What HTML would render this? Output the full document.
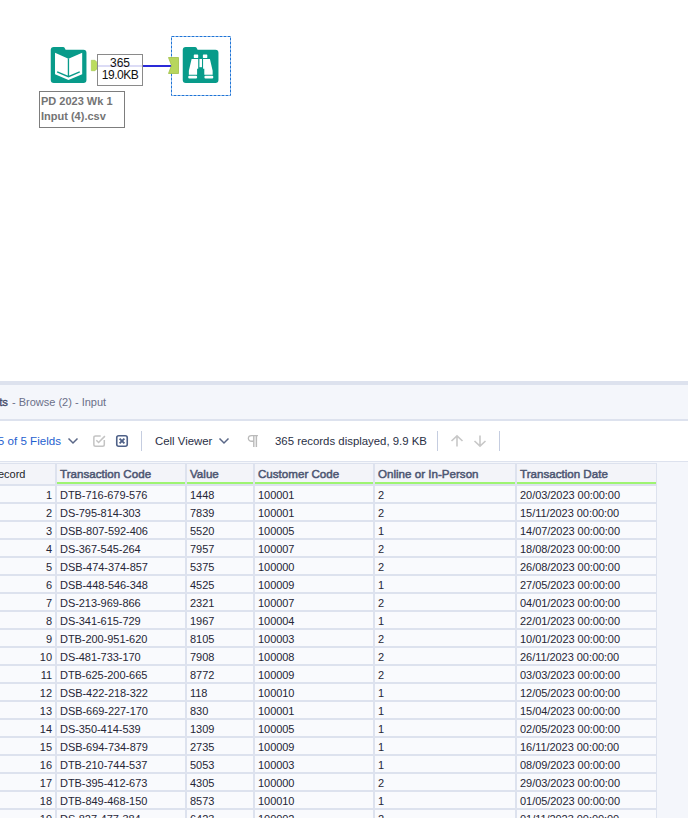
<!DOCTYPE html>
<html><head><meta charset="utf-8">
<style>
*{margin:0;padding:0;box-sizing:border-box}
html,body{width:688px;height:818px;overflow:hidden;background:#fff;font-family:"Liberation Sans",sans-serif}
.abs{position:absolute}
.ico{position:absolute}
.hc{position:absolute;top:464px;height:18px;background:#f3f4f9;font-weight:normal;font-size:11.6px;color:#4d5672;-webkit-text-stroke:0.5px #4d5672;white-space:nowrap;overflow:hidden}
.hc span{position:absolute;left:3px;top:3px;line-height:14px}
.dc{position:absolute;height:16px;background:#f9fafd;font-size:11px;color:#262636;white-space:nowrap;overflow:hidden}
.dc span{position:absolute;left:3px;top:2px;line-height:14px;letter-spacing:-0.05px}
.dc.num span{left:auto;right:3px}
</style></head><body>
<!-- canvas -->
<svg class="ico" style="left:48px;top:44px" width="42" height="42" viewBox="0 0 688 688">
<path fill="#089b8a" d="M45,100 Q45,50 95,50 L245,50 Q268,50 278,72 L288,95 L580,95 Q630,95 630,145 L630,590 Q630,640 580,640 L95,640 Q45,640 45,590 Z"/>
<path fill="#fff" d="M115,145 L335,240 L560,145 L560,495 L335,590 L115,495 Z"/>
<path fill="none" stroke="#089b8a" stroke-width="22" d="M335,238 L335,528 M150,458 L335,535 L520,458"/>
</svg>
<svg class="ico" style="left:90px;top:59px" width="9" height="13" viewBox="0 0 9 13"><path d="M1.3,1.3 H5 Q7.8,3 7.8,6.5 Q7.8,10 5,11.7 H1.3 Z" fill="#bbdc5f" stroke="#a3c84c" stroke-width="0.6"/></svg>
<div class="abs" style="left:143px;top:65px;width:28px;height:2px;background:#2a2ad8"></div>
<div class="abs" style="left:97px;top:54px;width:46px;height:32px;border:1px solid #8a8a8a;background:#fff"></div>
<div class="abs" style="left:98px;top:65px;width:44px;height:2px;background:#dcdcf6"></div>
<div class="abs" style="left:97px;top:57px;width:46px;text-align:center;font-size:12px;line-height:12px;color:#111">365<br><span style="letter-spacing:-0.5px">19.0KB</span></div>
<svg class="ico" style="left:171px;top:36px" width="61" height="61" viewBox="0 0 61 61"><rect x="0.5" y="0.5" width="59" height="59" fill="none" stroke="#1f74d6" stroke-width="1" stroke-dasharray="3,1"/></svg>
<svg class="ico" style="left:167px;top:56px" width="13" height="19" viewBox="0 0 13 19">
<path d="M1.5,1.5 L11.5,1.5 L11.5,17.5 L1.5,17.5 L4.5,9.5 Z" fill="#b7d65d" stroke="#9fbf48" stroke-width="0.8"/>
</svg>
<svg class="ico" style="left:180px;top:44px" width="42" height="42" viewBox="0 0 688 688">
<path fill="#089b8a" d="M45,100 Q45,50 95,50 L245,50 Q268,50 278,72 L288,95 L580,95 Q630,95 630,145 L630,590 Q630,640 580,640 L95,640 Q45,640 45,590 Z"/>
<g fill="#fff">
<rect x="226" y="172" width="72" height="56" rx="8"/>
<rect x="375" y="172" width="72" height="56" rx="8"/>
<path d="M190,244 L298,244 L298,405 L280,405 L280,505 L145,505 L145,440 Z"/>
<path d="M490,244 L378,244 L378,405 L398,405 L398,505 L535,505 L535,440 Z"/>
<rect x="318" y="246" width="42" height="134"/>
<rect x="135" y="520" width="145" height="45" rx="18"/>
<rect x="400" y="520" width="145" height="45" rx="18"/>
</g>
</svg>
<div class="abs" style="left:39px;top:91px;width:86px;height:37px;border:1px solid #7d7d7d;background:#fff"></div>
<div class="abs" style="left:41px;top:94px;font-size:11px;font-weight:bold;line-height:14.5px;color:#747474;white-space:nowrap">PD 2023 Wk 1<br>Input (4).csv</div>

<!-- panel -->
<div class="abs" style="left:0;top:381px;width:688px;height:4px;background:#dde2ee"></div>
<div class="abs" style="left:0;top:385px;width:688px;height:34px;background:#f4f6fb"></div>
<div class="abs" style="left:0;top:419px;width:688px;height:2px;background:#dde2ee"></div>
<div class="abs" style="left:0;top:421px;width:688px;height:40px;background:#fff"></div>
<div class="abs" style="left:0;top:461px;width:688px;height:1px;background:#dde2ee"></div>
<div class="abs" style="left:0;top:462px;width:688px;height:356px;background:#f4f6fb"></div>

<div class="abs" style="right:680px;top:395px;font-size:11.3px;color:#474d6b;-webkit-text-stroke:0.4px #474d6b;white-space:nowrap;line-height:14px">Results</div>
<div class="abs" style="left:12px;top:395px;font-size:11px;color:#6b7089;white-space:nowrap;line-height:14px">- Browse (2) - Input</div>

<div class="abs" style="right:627px;top:434px;font-size:11.6px;color:#1f5fd0;white-space:nowrap;line-height:14px">5 of 5 Fields</div>
<svg class="ico" style="left:67px;top:437px" width="12" height="8" viewBox="0 0 12 8"><path d="M1.5,1.5 L6,6 L10.5,1.5" fill="none" stroke="#5a6787" stroke-width="1.5"/></svg>
<svg class="ico" style="left:92px;top:434px" width="15" height="14" viewBox="0 0 15 14"><path d="M8.7,1.9 H3.6 Q1.85,1.9 1.85,3.65 V10.45 Q1.85,12.2 3.6,12.2 H10.55 Q12.3,12.2 12.3,10.45 V6" fill="none" stroke="#c4c4c4" stroke-width="1.5"/><path d="M4.3,6.2 L6.6,8.5 L12.9,2.1" fill="none" stroke="#c4c4c4" stroke-width="1.5"/></svg>
<svg class="ico" style="left:115px;top:434px" width="14" height="14" viewBox="0 0 14 14"><rect x="1.75" y="1.75" width="10.5" height="10.5" rx="2" fill="none" stroke="#4f6188" stroke-width="1.6"/><path d="M4.6,4.6 L9.4,9.4 M9.4,4.6 L4.6,9.4" stroke="#4f6188" stroke-width="1.9"/></svg>
<div class="abs" style="left:141px;top:431px;width:1px;height:20px;background:#c5cde0"></div>
<div class="abs" style="left:155px;top:434px;font-size:11.4px;color:#2a2f45;white-space:nowrap;line-height:14px">Cell Viewer</div>
<svg class="ico" style="left:217.5px;top:437px" width="12" height="8" viewBox="0 0 12 8"><path d="M1.5,1.5 L6,6 L10.5,1.5" fill="none" stroke="#5a6787" stroke-width="1.5"/></svg>
<svg class="ico" style="left:247px;top:434px" width="12" height="14" viewBox="0 0 12 14"><rect x="6.6" y="1.2" width="3" height="11.9" fill="#e4e4e4"/><path d="M10.9,1.65 H4.7 A3.35,2.8 0 0 0 4.7,7.25 H6.7" fill="none" stroke="#bababa" stroke-width="1.3"/><path d="M6.65,1.2 V13.1 M9.55,1.2 V13.1" stroke="#bababa" stroke-width="1.1"/></svg>
<div class="abs" style="left:275px;top:434px;font-size:11.4px;color:#2a2f45;white-space:nowrap;line-height:14px">365 records displayed, 9.9 KB</div>
<div class="abs" style="left:437px;top:431px;width:1px;height:20px;background:#c5cde0"></div>
<svg class="ico" style="left:450px;top:434px" width="14" height="14" viewBox="0 0 14 14"><path d="M7,12.5 V2 M1.5,7 L7,1.8 L12.5,7" fill="none" stroke="#c8c8c8" stroke-width="1.6"/></svg>
<svg class="ico" style="left:473px;top:434px" width="14" height="14" viewBox="0 0 14 14"><path d="M7,1.5 V12 M1.5,7 L7,12.2 L12.5,7" fill="none" stroke="#c8c8c8" stroke-width="1.6"/></svg>
<div class="abs" style="left:499px;top:431px;width:1px;height:20px;background:#c5cde0"></div>

<!-- table -->
<div class="abs" style="left:0;top:463px;width:657px;height:355px;background:#dde2ee"></div>
<div class="hc" style="left:-60px;width:115px;height:20px"></div><div class="abs" style="right:662.5px;top:467px;font-size:11px;line-height:14px;color:#1e1e2a;white-space:nowrap">Record</div>
<div class="hc" style="left:57px;width:128px"><span>Transaction Code</span></div><div class="abs" style="left:57px;top:482px;width:128px;height:2px;background:#9ef472"></div>
<div class="hc" style="left:187px;width:66px"><span>Value</span></div><div class="abs" style="left:187px;top:482px;width:66px;height:2px;background:#9ef472"></div>
<div class="hc" style="left:255px;width:118px"><span>Customer Code</span></div><div class="abs" style="left:255px;top:482px;width:118px;height:2px;background:#9ef472"></div>
<div class="hc" style="left:375px;width:140px"><span>Online or In-Person</span></div><div class="abs" style="left:375px;top:482px;width:140px;height:2px;background:#9ef472"></div>
<div class="hc" style="left:517px;width:139px"><span>Transaction Date</span></div><div class="abs" style="left:517px;top:482px;width:139px;height:2px;background:#9ef472"></div>
<div class="dc num" style="left:-60px;width:115px;top:486px"><span>1</span></div>
<div class="dc" style="left:57px;width:128px;top:486px"><span>DTB-716-679-576</span></div>
<div class="dc" style="left:187px;width:66px;top:486px"><span>1448</span></div>
<div class="dc" style="left:255px;width:118px;top:486px"><span>100001</span></div>
<div class="dc" style="left:375px;width:140px;top:486px"><span>2</span></div>
<div class="dc" style="left:517px;width:139px;top:486px"><span>20/03/2023 00:00:00</span></div>
<div class="dc num" style="left:-60px;width:115px;top:504px"><span>2</span></div>
<div class="dc" style="left:57px;width:128px;top:504px"><span>DS-795-814-303</span></div>
<div class="dc" style="left:187px;width:66px;top:504px"><span>7839</span></div>
<div class="dc" style="left:255px;width:118px;top:504px"><span>100001</span></div>
<div class="dc" style="left:375px;width:140px;top:504px"><span>2</span></div>
<div class="dc" style="left:517px;width:139px;top:504px"><span>15/11/2023 00:00:00</span></div>
<div class="dc num" style="left:-60px;width:115px;top:522px"><span>3</span></div>
<div class="dc" style="left:57px;width:128px;top:522px"><span>DSB-807-592-406</span></div>
<div class="dc" style="left:187px;width:66px;top:522px"><span>5520</span></div>
<div class="dc" style="left:255px;width:118px;top:522px"><span>100005</span></div>
<div class="dc" style="left:375px;width:140px;top:522px"><span>1</span></div>
<div class="dc" style="left:517px;width:139px;top:522px"><span>14/07/2023 00:00:00</span></div>
<div class="dc num" style="left:-60px;width:115px;top:540px"><span>4</span></div>
<div class="dc" style="left:57px;width:128px;top:540px"><span>DS-367-545-264</span></div>
<div class="dc" style="left:187px;width:66px;top:540px"><span>7957</span></div>
<div class="dc" style="left:255px;width:118px;top:540px"><span>100007</span></div>
<div class="dc" style="left:375px;width:140px;top:540px"><span>2</span></div>
<div class="dc" style="left:517px;width:139px;top:540px"><span>18/08/2023 00:00:00</span></div>
<div class="dc num" style="left:-60px;width:115px;top:558px"><span>5</span></div>
<div class="dc" style="left:57px;width:128px;top:558px"><span>DSB-474-374-857</span></div>
<div class="dc" style="left:187px;width:66px;top:558px"><span>5375</span></div>
<div class="dc" style="left:255px;width:118px;top:558px"><span>100000</span></div>
<div class="dc" style="left:375px;width:140px;top:558px"><span>2</span></div>
<div class="dc" style="left:517px;width:139px;top:558px"><span>26/08/2023 00:00:00</span></div>
<div class="dc num" style="left:-60px;width:115px;top:576px"><span>6</span></div>
<div class="dc" style="left:57px;width:128px;top:576px"><span>DSB-448-546-348</span></div>
<div class="dc" style="left:187px;width:66px;top:576px"><span>4525</span></div>
<div class="dc" style="left:255px;width:118px;top:576px"><span>100009</span></div>
<div class="dc" style="left:375px;width:140px;top:576px"><span>1</span></div>
<div class="dc" style="left:517px;width:139px;top:576px"><span>27/05/2023 00:00:00</span></div>
<div class="dc num" style="left:-60px;width:115px;top:594px"><span>7</span></div>
<div class="dc" style="left:57px;width:128px;top:594px"><span>DS-213-969-866</span></div>
<div class="dc" style="left:187px;width:66px;top:594px"><span>2321</span></div>
<div class="dc" style="left:255px;width:118px;top:594px"><span>100007</span></div>
<div class="dc" style="left:375px;width:140px;top:594px"><span>2</span></div>
<div class="dc" style="left:517px;width:139px;top:594px"><span>04/01/2023 00:00:00</span></div>
<div class="dc num" style="left:-60px;width:115px;top:612px"><span>8</span></div>
<div class="dc" style="left:57px;width:128px;top:612px"><span>DS-341-615-729</span></div>
<div class="dc" style="left:187px;width:66px;top:612px"><span>1967</span></div>
<div class="dc" style="left:255px;width:118px;top:612px"><span>100004</span></div>
<div class="dc" style="left:375px;width:140px;top:612px"><span>1</span></div>
<div class="dc" style="left:517px;width:139px;top:612px"><span>22/01/2023 00:00:00</span></div>
<div class="dc num" style="left:-60px;width:115px;top:630px"><span>9</span></div>
<div class="dc" style="left:57px;width:128px;top:630px"><span>DTB-200-951-620</span></div>
<div class="dc" style="left:187px;width:66px;top:630px"><span>8105</span></div>
<div class="dc" style="left:255px;width:118px;top:630px"><span>100003</span></div>
<div class="dc" style="left:375px;width:140px;top:630px"><span>2</span></div>
<div class="dc" style="left:517px;width:139px;top:630px"><span>10/01/2023 00:00:00</span></div>
<div class="dc num" style="left:-60px;width:115px;top:648px"><span>10</span></div>
<div class="dc" style="left:57px;width:128px;top:648px"><span>DS-481-733-170</span></div>
<div class="dc" style="left:187px;width:66px;top:648px"><span>7908</span></div>
<div class="dc" style="left:255px;width:118px;top:648px"><span>100008</span></div>
<div class="dc" style="left:375px;width:140px;top:648px"><span>2</span></div>
<div class="dc" style="left:517px;width:139px;top:648px"><span>26/11/2023 00:00:00</span></div>
<div class="dc num" style="left:-60px;width:115px;top:666px"><span>11</span></div>
<div class="dc" style="left:57px;width:128px;top:666px"><span>DTB-625-200-665</span></div>
<div class="dc" style="left:187px;width:66px;top:666px"><span>8772</span></div>
<div class="dc" style="left:255px;width:118px;top:666px"><span>100009</span></div>
<div class="dc" style="left:375px;width:140px;top:666px"><span>2</span></div>
<div class="dc" style="left:517px;width:139px;top:666px"><span>03/03/2023 00:00:00</span></div>
<div class="dc num" style="left:-60px;width:115px;top:684px"><span>12</span></div>
<div class="dc" style="left:57px;width:128px;top:684px"><span>DSB-422-218-322</span></div>
<div class="dc" style="left:187px;width:66px;top:684px"><span>118</span></div>
<div class="dc" style="left:255px;width:118px;top:684px"><span>100010</span></div>
<div class="dc" style="left:375px;width:140px;top:684px"><span>1</span></div>
<div class="dc" style="left:517px;width:139px;top:684px"><span>12/05/2023 00:00:00</span></div>
<div class="dc num" style="left:-60px;width:115px;top:702px"><span>13</span></div>
<div class="dc" style="left:57px;width:128px;top:702px"><span>DSB-669-227-170</span></div>
<div class="dc" style="left:187px;width:66px;top:702px"><span>830</span></div>
<div class="dc" style="left:255px;width:118px;top:702px"><span>100001</span></div>
<div class="dc" style="left:375px;width:140px;top:702px"><span>1</span></div>
<div class="dc" style="left:517px;width:139px;top:702px"><span>15/04/2023 00:00:00</span></div>
<div class="dc num" style="left:-60px;width:115px;top:720px"><span>14</span></div>
<div class="dc" style="left:57px;width:128px;top:720px"><span>DS-350-414-539</span></div>
<div class="dc" style="left:187px;width:66px;top:720px"><span>1309</span></div>
<div class="dc" style="left:255px;width:118px;top:720px"><span>100005</span></div>
<div class="dc" style="left:375px;width:140px;top:720px"><span>1</span></div>
<div class="dc" style="left:517px;width:139px;top:720px"><span>02/05/2023 00:00:00</span></div>
<div class="dc num" style="left:-60px;width:115px;top:738px"><span>15</span></div>
<div class="dc" style="left:57px;width:128px;top:738px"><span>DSB-694-734-879</span></div>
<div class="dc" style="left:187px;width:66px;top:738px"><span>2735</span></div>
<div class="dc" style="left:255px;width:118px;top:738px"><span>100009</span></div>
<div class="dc" style="left:375px;width:140px;top:738px"><span>1</span></div>
<div class="dc" style="left:517px;width:139px;top:738px"><span>16/11/2023 00:00:00</span></div>
<div class="dc num" style="left:-60px;width:115px;top:756px"><span>16</span></div>
<div class="dc" style="left:57px;width:128px;top:756px"><span>DTB-210-744-537</span></div>
<div class="dc" style="left:187px;width:66px;top:756px"><span>5053</span></div>
<div class="dc" style="left:255px;width:118px;top:756px"><span>100003</span></div>
<div class="dc" style="left:375px;width:140px;top:756px"><span>1</span></div>
<div class="dc" style="left:517px;width:139px;top:756px"><span>08/09/2023 00:00:00</span></div>
<div class="dc num" style="left:-60px;width:115px;top:774px"><span>17</span></div>
<div class="dc" style="left:57px;width:128px;top:774px"><span>DTB-395-412-673</span></div>
<div class="dc" style="left:187px;width:66px;top:774px"><span>4305</span></div>
<div class="dc" style="left:255px;width:118px;top:774px"><span>100000</span></div>
<div class="dc" style="left:375px;width:140px;top:774px"><span>2</span></div>
<div class="dc" style="left:517px;width:139px;top:774px"><span>29/03/2023 00:00:00</span></div>
<div class="dc num" style="left:-60px;width:115px;top:792px"><span>18</span></div>
<div class="dc" style="left:57px;width:128px;top:792px"><span>DTB-849-468-150</span></div>
<div class="dc" style="left:187px;width:66px;top:792px"><span>8573</span></div>
<div class="dc" style="left:255px;width:118px;top:792px"><span>100010</span></div>
<div class="dc" style="left:375px;width:140px;top:792px"><span>1</span></div>
<div class="dc" style="left:517px;width:139px;top:792px"><span>01/05/2023 00:00:00</span></div>
<div class="dc num" style="left:-60px;width:115px;top:810px"><span>19</span></div>
<div class="dc" style="left:57px;width:128px;top:810px"><span>DS-827-477-384</span></div>
<div class="dc" style="left:187px;width:66px;top:810px"><span>6423</span></div>
<div class="dc" style="left:255px;width:118px;top:810px"><span>100002</span></div>
<div class="dc" style="left:375px;width:140px;top:810px"><span>2</span></div>
<div class="dc" style="left:517px;width:139px;top:810px"><span>01/11/2023 00:00:00</span></div>
</body></html>
